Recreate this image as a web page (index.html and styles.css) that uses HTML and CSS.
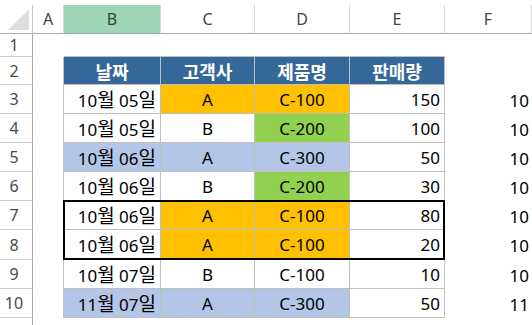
FILE: index.html
```html
<!DOCTYPE html>
<html lang="ko">
<head>
<meta charset="utf-8">
<title>Sheet</title>
<link rel="stylesheet" href="styles.css">
</head>
<body>
<div class="sheet">
  <div class="corner"><span class="tri"></span></div>
  <div class="ch">A</div>
  <div class="ch on">B</div>
  <div class="ch">C</div>
  <div class="ch">D</div>
  <div class="ch">E</div>
  <div class="ch">F</div>

  <div class="rh">1</div>
  <div class="c"></div>
  <div class="c top"></div>
  <div class="c top"></div>
  <div class="c top"></div>
  <div class="c top"></div>
  <div class="c"></div>

  <div class="rh">2</div>
  <div class="c edge"></div>
  <div class="t hd">날짜</div>
  <div class="t hd">고객사</div>
  <div class="t hd">제품명</div>
  <div class="t hd">판매량</div>
  <div class="c"></div>

  <div class="rh">3</div>
  <div class="c edge"></div>
  <div class="t r"><span>10<span class="k">월</span> 05<span class="k">일</span></span></div>
  <div class="t m orange">A</div>
  <div class="t m orange">C-100</div>
  <div class="t r">150</div>
  <div class="c f">10</div>

  <div class="rh">4</div>
  <div class="c edge"></div>
  <div class="t r"><span>10<span class="k">월</span> 05<span class="k">일</span></span></div>
  <div class="t m">B</div>
  <div class="t m green">C-200</div>
  <div class="t r">100</div>
  <div class="c f">10</div>

  <div class="rh">5</div>
  <div class="c edge"></div>
  <div class="t r blue"><span>10<span class="k">월</span> 06<span class="k">일</span></span></div>
  <div class="t m blue">A</div>
  <div class="t m blue">C-300</div>
  <div class="t r">50</div>
  <div class="c f">10</div>

  <div class="rh">6</div>
  <div class="c edge"></div>
  <div class="t r"><span>10<span class="k">월</span> 06<span class="k">일</span></span></div>
  <div class="t m">B</div>
  <div class="t m green">C-200</div>
  <div class="t r">30</div>
  <div class="c f">10</div>

  <div class="rh">7</div>
  <div class="c edge"></div>
  <div class="t r"><span>10<span class="k">월</span> 06<span class="k">일</span></span></div>
  <div class="t m orange">A</div>
  <div class="t m orange">C-100</div>
  <div class="t r">80</div>
  <div class="c f">10</div>

  <div class="rh">8</div>
  <div class="c edge"></div>
  <div class="t r"><span>10<span class="k">월</span> 06<span class="k">일</span></span></div>
  <div class="t m orange">A</div>
  <div class="t m orange">C-100</div>
  <div class="t r">20</div>
  <div class="c f">10</div>

  <div class="rh">9</div>
  <div class="c edge"></div>
  <div class="t r"><span>10<span class="k">월</span> 07<span class="k">일</span></span></div>
  <div class="t m">B</div>
  <div class="t m">C-100</div>
  <div class="t r">10</div>
  <div class="c f">10</div>

  <div class="rh">10</div>
  <div class="c edge"></div>
  <div class="t r blue"><span>11<span class="k">월</span> 07<span class="k">일</span></span></div>
  <div class="t m blue">A</div>
  <div class="t m blue">C-300</div>
  <div class="t r">50</div>
  <div class="c f">11</div>

  <div class="rh end"></div>
  <div class="c"></div>
  <div class="c"></div>
  <div class="c"></div>
  <div class="c"></div>
  <div class="c"></div>
  <div class="c"></div>

  <div class="selbox"></div>
</div>
</body>
</html>
```

FILE: styles.css
```css
html, body {
  margin: 0;
  padding: 0;
  background: #fff;
}
body {
  width: 532px;
  height: 325px;
  overflow: hidden;
  padding-top: 5px;
  box-sizing: border-box;
  font-family: "Noto Sans", "Noto Sans CJK KR", sans-serif;
}
.sheet {
  display: grid;
  grid-template-columns: 33px 31px 97px 94px 95px 95px 87px;
  grid-template-rows: 29px 23px 28px repeat(5, 29px) 30px 29px 29px 7px;
  position: relative;
  width: 532px;
}
.sheet > div {
  box-sizing: border-box;
}
.corner {
  border-right: 1px solid #c8c8c8;
  border-bottom: 1px solid #ababab;
  display: flex;
  align-items: flex-end;
  justify-content: flex-end;
  padding: 0 3px 3px 0;
}
.tri {
  display: block;
  width: 21px;
  height: 21px;
  background: #dedede;
  clip-path: polygon(100% 0, 100% 100%, 0 100%);
}
.ch {
  border-right: 1px solid #d8d8d8;
  border-bottom: 1px solid #ababab;
  display: flex;
  align-items: center;
  justify-content: center;
  font-family: "Noto Sans", sans-serif;
  font-size: 16px;
  color: #444;
  padding-bottom: 1px;
}
.ch.on {
  background: #9fd5b7;
  color: #2f4a3a;
}
.rh {
  border-right: 1px solid #ababab;
  border-bottom: 1px solid #cfcfcf;
  display: flex;
  align-items: center;
  justify-content: center;
  padding-right: 4px;
  font-family: "Noto Sans", sans-serif;
  font-size: 16px;
  color: #4a4a4a;
}
.rh.end {
  border-bottom: 0;
}
.c.top {
  border-bottom: 1px solid #bfbfbf;
}
.c.edge {
  border-right: 1px solid #bfbfbf;
}
.t {
  border-right: 1px solid #bfbfbf;
  border-bottom: 1px solid #bfbfbf;
  display: flex;
  align-items: center;
  font-size: 17px;
  line-height: 24px;
  color: #000;
  padding-top: 1px;
  white-space: nowrap;
}
.k {
  font-family: "Noto Sans CJK KR", sans-serif;
  font-size: 19px;
}
.t.r {
  justify-content: flex-end;
  padding-right: 4px;
}
.t.m {
  justify-content: center;
}
.t.hd {
  background: #356798;
  color: #fff;
  font-weight: bold;
  font-family: "Noto Sans CJK KR", sans-serif;
  font-size: 18px;
  justify-content: center;
  padding-top: 0;
}
.orange {
  background: #ffc000;
}
.green {
  background: #92d050;
}
.blue {
  background: #b4c6e7;
}
.c.f {
  display: flex;
  align-items: center;
  justify-content: flex-end;
  padding-right: 3px;
  padding-top: 1px;
  font-size: 17px;
  color: #000;
}
.selbox {
  position: absolute;
  grid-row: 8 / 10;
  grid-column: 3 / 7;
  top: -1px;
  left: -1px;
  right: 0;
  bottom: 0;
  border: 2px solid #000;
  pointer-events: none;
}
```
